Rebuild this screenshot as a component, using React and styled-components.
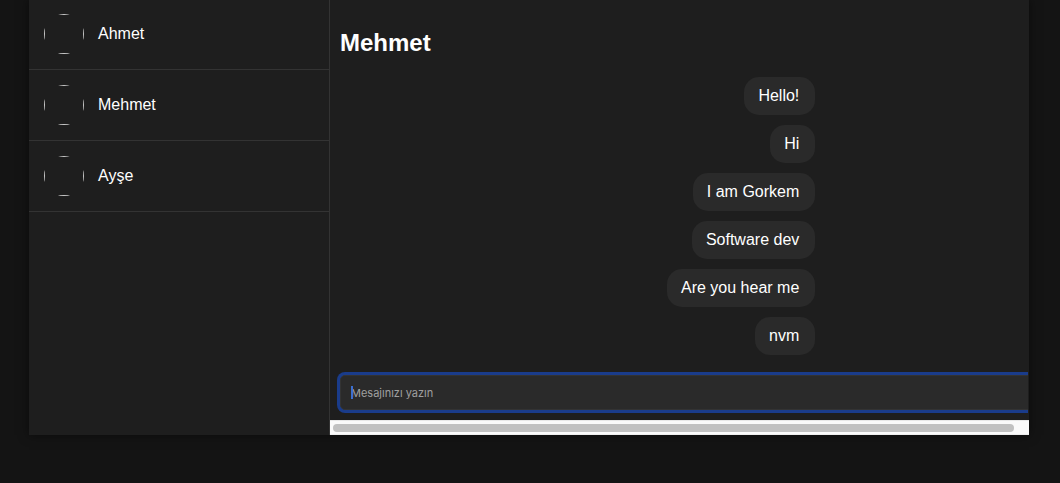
import React, { useState } from "react";
import styled, { createGlobalStyle } from "styled-components";

const GlobalStyle = createGlobalStyle`
  *, *::before, *::after { box-sizing: border-box; }
  body {
    margin: 0;
    background: #141414;
    color: #fff;
    font-family: "Liberation Sans", Arial, sans-serif;
    font-size: 16px;
    line-height: 18px;
  }
`;

const Page = styled.div`
  display: flex;
  min-height: 100vh;
  align-items: flex-start;
  padding: 0 31px 48px 29px;
  border-bottom: 1px solid #180c10;
`;

const Shell = styled.div`
  display: flex;
  flex: 1;
  min-width: 0;
  margin-top: -1px;
  background: #1e1e1e;
  box-shadow: 0 0 10px rgba(0, 0, 0, 0.5);
`;

const Sidebar = styled.nav`
  flex: 0 0 301px;
  border-right: 1px solid #333;
`;

const ContactList = styled.ul`
  margin: 0;
  padding: 0;
  list-style: none;
`;

const Contact = styled.button`
  display: flex;
  align-items: center;
  gap: 14px;
  width: 100%;
  padding: 15px;
  border: 0;
  border-bottom: 1px solid #333;
  background: none;
  color: inherit;
  font: inherit;
  text-align: left;
  cursor: pointer;
`;

const Avatar = styled.span`
  width: 40px;
  height: 40px;
  border-radius: 50%;
  overflow: hidden;

  &::before {
    content: "";
    display: block;
    height: 100%;
    border: 1px solid #c8c8c8;
  }
`;

const Chat = styled.main`
  display: flex;
  flex: 1;
  flex-direction: column;
  min-width: 0;
`;

const ChatBody = styled.div`
  flex: 1;
  padding: 30px 10px 17px;
`;

const Title = styled.h2`
  margin: 0 0 20px;
  font-size: 24px;
  line-height: 28px;
`;

const Messages = styled.div`
  display: flex;
  flex-direction: column;
  align-items: flex-end;
  gap: 10px;
  width: 70%;
`;

const Bubble = styled.div`
  padding: 10px 16px 10px 14px;
  border-radius: 15px;
  background: #2a2a2a;
`;

const Composer = styled.form`
  position: relative;
  display: flex;
  margin: 0 1px 7px 0;
  padding: 3px 0 3px 10px;
  overflow: hidden;
`;

const MessageInput = styled.input`
  flex: 1;
  min-width: 0;
  height: 35px;
  margin-right: -10px;
  padding: 0 10px;
  border: 1px solid #333;
  border-radius: 5px;
  outline: 0;
  box-shadow: 0 0 0 3px #1a3c8b;
  background: #2a2a2a;
  color: #fff;
  font-family: Inter, sans-serif;
  font-size: 11px;

  &::placeholder { color: #a0a0a0; opacity: 1; }
`;

const Caret = styled.span`
  position: absolute;
  left: 21px;
  top: 14px;
  width: 2px;
  height: 13px;
  background: #3c6fd0;
`;

const ScrollTrack = styled.div`
  height: 15px;
  padding: 3px 15px 3px 3px;
  border-top: 1px solid #e8e8e8;
  border-bottom: 1px solid #ededed;
  background: #fafafa;
`;

const ScrollThumb = styled.div`
  height: 8px;
  border-radius: 4px;
  background: #c1c1c1;
`;

const contacts = ["Ahmet", "Mehmet", "Ayşe"];
const messages = ["Hello!", "Hi", "I am Gorkem", "Software dev", "Are you hear me", "nvm"];

export default function App() {
  const [active, setActive] = useState("Mehmet");
  const [draft, setDraft] = useState("");

  return (
    <>
      <GlobalStyle />
      <Page>
        <Shell>
          <Sidebar>
            <ContactList>
              {contacts.map((name) => (
                <li key={name}>
                  <Contact type="button" onClick={() => setActive(name)}>
                    <Avatar />
                    <span>{name}</span>
                  </Contact>
                </li>
              ))}
            </ContactList>
          </Sidebar>
          <Chat>
            <ChatBody>
              <Title>{active}</Title>
              <Messages>
                {messages.map((text) => (
                  <Bubble key={text}>{text}</Bubble>
                ))}
              </Messages>
            </ChatBody>
            <Composer onSubmit={(e) => e.preventDefault()}>
              <MessageInput
                type="text"
                aria-label="Mesajınızı yazın"
                placeholder="Mesajınızı yazın"
                value={draft}
                onChange={(e) => setDraft(e.target.value)}
              />
              {draft === "" && <Caret aria-hidden="true" />}
            </Composer>
            <ScrollTrack aria-hidden="true">
              <ScrollThumb />
            </ScrollTrack>
          </Chat>
        </Shell>
      </Page>
    </>
  );
}
